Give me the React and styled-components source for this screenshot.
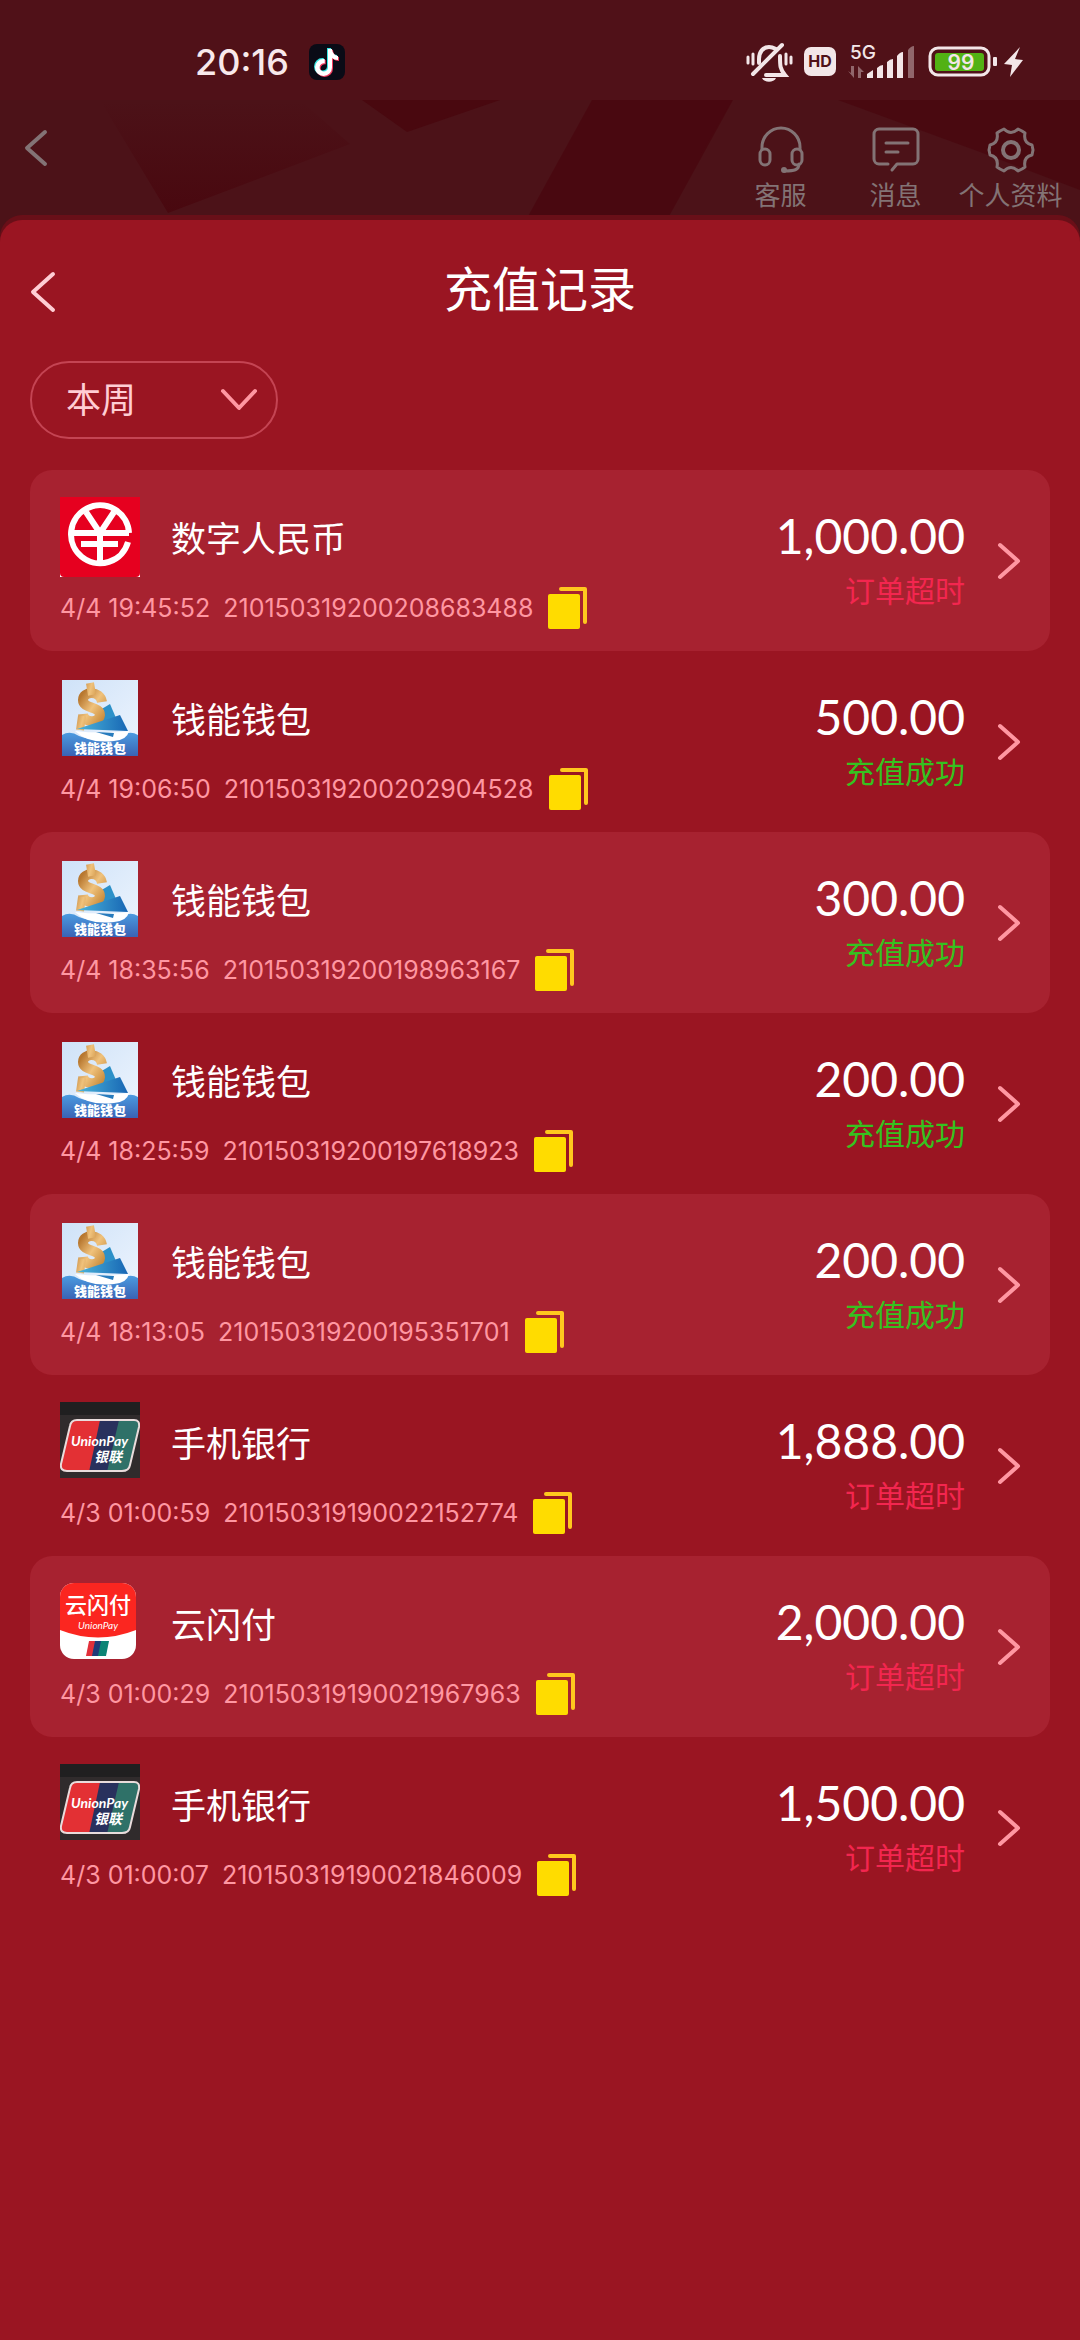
import styled, { createGlobalStyle } from "styled-components";

const records = [
  { id: "210150319200208683488", icon: "ecny", name: "数字人民币", time: "4/4 19:45:52", amount: "1,000.00", ok: false },
  { id: "210150319200202904528", icon: "wallet", name: "钱能钱包", time: "4/4 19:06:50", amount: "500.00", ok: true },
  { id: "210150319200198963167", icon: "wallet", name: "钱能钱包", time: "4/4 18:35:56", amount: "300.00", ok: true },
  { id: "210150319200197618923", icon: "wallet", name: "钱能钱包", time: "4/4 18:25:59", amount: "200.00", ok: true },
  { id: "210150319200195351701", icon: "wallet", name: "钱能钱包", time: "4/4 18:13:05", amount: "200.00", ok: true },
  { id: "210150319190022152774", icon: "bank", name: "手机银行", time: "4/3 01:00:59", amount: "1,888.00", ok: false },
  { id: "210150319190021967963", icon: "flash", name: "云闪付", time: "4/3 01:00:29", amount: "2,000.00", ok: false },
  { id: "210150319190021846009", icon: "bank", name: "手机银行", time: "4/3 01:00:07", amount: "1,500.00", ok: false },
];

function Chevron({ width, height, points, stroke = 4 }) {
  return (
    <svg width={width} height={height} viewBox={`0 0 ${width} ${height}`} aria-hidden="true">
      <polyline points={points} fill="none" stroke="currentColor" strokeWidth={stroke} strokeLinecap="round" strokeLinejoin="round" />
    </svg>
  );
}

function TikTok() {
  const note = "M19 5h4c.4 4 2.600 6.600 6 7v4c-2.400 0-4.400-.8-6-2v9.500a8.500 8.500 0 1 1-8.500-8.500h1.200v4.300a4.200 4.200 0 1 0 3.300 4.200z";
  return (
    <svg width="36" height="36" viewBox="0 0 36 36" aria-hidden="true">
      <rect width="36" height="36" rx="8" fill="#0a0b16" />
      <path d={note} fill="#37e5e2" transform="translate(-1 -1)" />
      <path d={note} fill="#f23a5d" transform="translate(1 1)" />
      <path d={note} fill="#fff" />
    </svg>
  );
}

function StatusIcons() {
  return (
    <svg width="278" height="40" viewBox="0 0 278 40" fill="#f3e6e8" aria-label="5G 99%">
      {/* muted bell */}
      <g fill="none" stroke="#f3e6e8" strokeWidth="4" strokeLinecap="round">
        <path d="M13 21v-4c0-7 4-12 10-12 3 0 5 1 7 2" />
        <path d="M34 14c0 10 0 13 5 19H20" />
        <path d="M7 32L36 3" />
        <path d="M2 15v6M7 12v10M40 12v10M45 15v6" strokeWidth="3" />
      </g>
      <path d="M16 36h14c-2 5-12 5-14 0z" />
      {/* HD badge */}
      <rect x="58" y="5" width="32" height="29" rx="7" />
      <text x="74" y="25" fill="#501118" fontSize="16" fontWeight="700" fontFamily="Inter, sans-serif" textAnchor="middle">HD</text>
      {/* signal */}
      <text x="104" y="17" fontSize="19" fontWeight="500" fontFamily="Inter, sans-serif">5G</text>
      <path d="M102 29l6 7V24h-3v7zM112 36V24l6 6h-3v6z" opacity=".4" />
      <path d="M121 32l6-4v8h-6zM131 26q3-3 6-3v13h-6zM141 20q3-3 6-3v19h-6zM151 14q3-4 6-4v26h-6z" />
      <path d="M162 8q3-4 6-4v32h-6z" opacity=".4" />
      {/* battery */}
      <rect x="184" y="6" width="59" height="27" rx="8" fill="none" stroke="#f3e6e8" strokeWidth="3" />
      <rect x="189" y="11" width="49" height="18" rx="3" fill="#52b114" />
      <text x="215" y="28" fontSize="21" fontWeight="600" fontFamily="Inter, sans-serif" textAnchor="middle">99</text>
      <rect x="247" y="15" width="4" height="9" rx="1" />
      <path d="M274 5L258 22l8 1-2 12 13-17-8-1z" />
    </svg>
  );
}

function Facets() {
  return (
    <svg width="100%" height="120" viewBox="0 0 1080 120" preserveAspectRatio="none" aria-hidden="true">
      <defs>
        <linearGradient id="facet" x1="0" y1="1" x2="0" y2="0">
          <stop offset="0" stopColor="#49080f" />
          <stop offset="1" stopColor="#49080f" stopOpacity="0" />
        </linearGradient>
      </defs>
      <path d="M100 0L168 113 350 44 300 0z" fill="url(#facet)" />
      <path d="M362 0h138l-93 32z" fill="#49080f" />
      <path d="M592 0h141l-66 120H526z" fill="#49080f" opacity=".9" />
      <path d="M838 0h242v90L980 52z" fill="#49080f" opacity=".8" />
      <path d="M700 0h32l-32 55z" fill="#49080f" opacity=".3" />
    </svg>
  );
}

function Headset() {
  return (
    <svg width="48" height="48" viewBox="0 0 48 48" fill="none" stroke="currentColor" strokeWidth="3" aria-hidden="true">
      <path d="M5 24v-3a19 19 0 0 1 38 0v3" />
      <rect x="3" y="23" width="10" height="16" rx="5" />
      <rect x="35" y="23" width="10" height="16" rx="5" />
      <path d="M42 38c0 6-5 7-14 7" strokeLinecap="round" />
      <circle cx="27" cy="44" r="3" fill="currentColor" stroke="none" />
    </svg>
  );
}

function Message() {
  return (
    <svg width="48" height="48" viewBox="0 0 48 48" fill="none" stroke="currentColor" strokeWidth="3" strokeLinecap="round" strokeLinejoin="round" aria-hidden="true">
      <path d="M16 38H7a5 5 0 0 1-5-5V8a5 5 0 0 1 5-5h34a5 5 0 0 1 5 5v25a5 5 0 0 1-5 5H25l-5 6" />
      <path d="M14 17h22M14 26h12" />
    </svg>
  );
}

function Gear() {
  return (
    <svg width="48" height="48" viewBox="0 0 48 48" fill="none" stroke="currentColor" strokeWidth="3" strokeLinejoin="round" aria-hidden="true">
      <path d="M13 5L17 3Q24 10 31 3L35 5 38 7Q36 17 45 19L46 24 45 29Q36 31 38 41L35 43 31 45Q24 38 17 45L13 43 10 41Q12 31 3 29L2 24 3 19Q12 17 10 7z" />
      <circle cx="24" cy="24" r="8" strokeWidth="4" />
    </svg>
  );
}

function Copy() {
  return (
    <svg width="40" height="42" viewBox="0 0 40 42" aria-hidden="true">
      <rect y="7" width="32" height="35" rx="2" fill="#ffdc00" />
      <path d="M13 2h24v33" fill="none" stroke="#ffc81e" strokeWidth="4" strokeLinecap="round" strokeLinejoin="round" />
    </svg>
  );
}

function PayIcon({ kind }) {
  if (kind === "ecny") {
    return (
      <svg width="80" height="80" viewBox="0 0 80 80" aria-hidden="true">
        <rect width="80" height="80" fill="#fff" />
        <rect width="80" height="80" rx="4" fill="#e6001f" />
        <rect width="80" height="40" fill="#e6001f" />
        <g fill="none" stroke="#fff" strokeWidth="6">
          <path d="M68 45A29 29 0 1 1 69 36" />
          <path d="M10 36h59M21 47h37M26 15l14 21 14-21M40 36v30" />
        </g>
      </svg>
    );
  }
  if (kind === "bank") {
    return (
      <svg width="80" height="76" viewBox="0 0 80 76" aria-hidden="true">
        <rect width="80" height="76" fill="#302b2c" />
        <rect width="80" height="13" fill="#201f20" />
        <clipPath id="card">
          <path d="M17 18h57q6 0 5 7l-9 38q-1 6-8 6H7q-7 0-6-7l9-38q1-6 7-6z" />
        </clipPath>
        <g clipPath="url(#card)">
          <rect width="80" height="76" fill="#2f7168" />
          <path d="M0 0h44L30 76H0z" fill="#e33034" />
          <path d="M40 18h19L47 70H29z" fill="#29315d" />
        </g>
        <path d="M17 18h57q6 0 5 7l-9 38q-1 6-8 6H7q-7 0-6-7l9-38q1-6 7-6z" fill="none" stroke="#e9dcdc" strokeWidth="2" />
        <g fill="#fff" fontStyle="italic" fontWeight="700">
          <text x="11" y="44" fontSize="14" fontFamily="Lato, sans-serif">UnionPay</text>
          <text x="34" y="60" fontSize="14" fontFamily="Noto Sans CJK SC, sans-serif">银联</text>
        </g>
      </svg>
    );
  }
  if (kind === "flash") {
    return (
      <svg width="80" height="80" viewBox="0 0 80 80" aria-hidden="true">
        <clipPath id="app"><rect width="76" height="76" rx="14" /></clipPath>
        <g clipPath="url(#app)">
          <rect width="76" height="76" fill="#fff" />
          <path d="M0 0h76v47Q38 62 0 47z" fill="#fb2620" />
        </g>
        <text x="38" y="30" fill="#fff" fontSize="22" fontWeight="500" fontFamily="Noto Sans CJK SC, sans-serif" textAnchor="middle">云闪付</text>
        <text x="38" y="46" fill="#fff" fontSize="10" fontStyle="italic" fontFamily="Lato, sans-serif" textAnchor="middle">UnionPay</text>
        <path d="M29 58h8l-3 15h-8z" fill="#e2303a" />
        <path d="M35 58h8l-3 15h-8z" fill="#1f3a78" />
        <path d="M41 58h8l-3 15h-8z" fill="#0c8475" />
      </svg>
    );
  }
  return (
    <svg width="80" height="80" viewBox="0 0 80 80" aria-hidden="true">
      <defs>
        <linearGradient id="sky" x1="0" y1="0" x2="1" y2="1">
          <stop offset="0" stopColor="#cfe2f8" />
          <stop offset="1" stopColor="#eef5fe" />
        </linearGradient>
        <linearGradient id="sail" x1="0" y1="0" x2="1" y2="0">
          <stop offset="0" stopColor="#4bb5da" />
          <stop offset="1" stopColor="#1766b4" />
        </linearGradient>
        <linearGradient id="sea" x1="0" y1="0" x2="0" y2="1">
          <stop offset="0" stopColor="#4b9be0" />
          <stop offset="1" stopColor="#3a62b4" />
        </linearGradient>
        <linearGradient id="gold" x1="0" y1="0" x2="1" y2="1">
          <stop offset="0" stopColor="#b87830" />
          <stop offset=".5" stopColor="#f0c27c" />
          <stop offset="1" stopColor="#c98c3c" />
        </linearGradient>
      </defs>
      <rect x="2" y="2" width="76" height="76" fill="url(#sky)" />
      <path d="M40 32l10-6 6 14-16 8z" fill="#2c90c8" />
      <g fill="none" stroke="url(#gold)">
        <path d="M42 24C40 12 23 13 23 22s17 6 17 15c-1 9-16 8-17-1" strokeWidth="10" />
        <path d="M30 5l2 12M22 38l-2 14" strokeWidth="8" />
      </g>
      <path d="M17 51l43-14 8 16z" fill="url(#sail)" />
      <path d="M2 57q8-5 17 1 21 8 42 0 9-6 17-1v21H2z" fill="url(#sea)" />
      <path d="M15 53q25 3 54 0-2 9-15 10-26 3-39-10z" fill="#fff" />
      <path d="M36 54l18 1-1 4z" fill="#277bbd" />
      <text x="40" y="75" fill="#fff" fontSize="13" fontWeight="900" fontFamily="Noto Sans CJK SC, sans-serif" textAnchor="middle">钱能钱包</text>
    </svg>
  );
}

export default function App() {
  return (
    <>
      <GlobalStyle />
      <Page>
        <StatusBar>
          <Clock>
            20:16
            <TikTok />
          </Clock>
          <StatusIcons />
        </StatusBar>
        <TopNav>
          <Backdrop>
            <Facets />
          </Backdrop>
          <BackButton aria-label="返回首页">
            <Chevron width={24} height={38} points="21,3 3,19 21,35" />
          </BackButton>
          <NavLinks>
            <NavLink href="#service">
              <Headset />
              客服
            </NavLink>
            <NavLink href="#messages">
              <Message />
              消息
            </NavLink>
            <NavLink href="#profile">
              <Gear />
              个人资料
            </NavLink>
          </NavLinks>
        </TopNav>
        <Sheet>
          <SheetHeader>
            <SheetBack aria-label="返回">
              <Chevron width={26} height={42} points="23,3 3,21 23,39" />
            </SheetBack>
            <Title>充值记录</Title>
          </SheetHeader>
          <Filter>
            <Select aria-label="时间范围" defaultValue="week">
              <option value="week">本周</option>
            </Select>
            <Chevron width={38} height={24} points="3,3 19,20 35,3" />
          </Filter>
          <List>
            {records.map((r) => (
              <Row key={r.id}>
                <Info>
                  <Method>
                    <IconBox>
                      <PayIcon kind={r.icon} />
                    </IconBox>
                    {r.name}
                  </Method>
                  <Meta>
                    <span>{r.time}</span>
                    <span>{r.id}</span>
                    <CopyButton aria-label="复制">
                      <Copy />
                    </CopyButton>
                  </Meta>
                </Info>
                <Result>
                  <Amount>{r.amount}</Amount>
                  <Status $ok={r.ok}>{r.ok ? "充值成功" : "订单超时"}</Status>
                </Result>
                <Detail href={"#" + r.id} aria-label="详情">
                  <Chevron width={24} height={38} points="3,3 21,19 3,35" />
                </Detail>
              </Row>
            ))}
          </List>
        </Sheet>
      </Page>
    </>
  );
}

const GlobalStyle = createGlobalStyle`
  * {
    box-sizing: border-box;
  }

  body {
    margin: 0;
    background: #9a1522;
    font-family: Inter, "Noto Sans CJK SC", sans-serif;
  }

  svg {
    display: block;
    flex-shrink: 0;
  }

  button {
    border: none;
    padding: 0;
    background: none;
    cursor: pointer;
  }
`;

const Page = styled.div`
  display: flex;
  flex-direction: column;
  min-height: 100vh;
  background: #4c1218;
`;

const StatusBar = styled.header`
  display: flex;
  align-items: center;
  justify-content: space-between;
  height: 100px;
  padding: 24px 56px 0 195px;
  background: #501118;
`;

const Clock = styled.div`
  display: flex;
  align-items: center;
  gap: 20px;
  color: #f8e9eb;
  font-size: 36px;
  font-weight: 500;
`;

const TopNav = styled.nav`
  position: relative;
  display: flex;
  justify-content: space-between;
  height: 120px;
  padding: 26px 12px 0 24px;
  color: #837375;
`;

const Backdrop = styled.div`
  position: absolute;
  inset: 0;
`;

const BackButton = styled.button`
  position: relative;
  align-self: flex-start;
  padding-top: 3px;
  color: inherit;
`;

const NavLinks = styled.div`
  position: relative;
  display: flex;
`;

const NavLink = styled.a`
  display: flex;
  flex-direction: column;
  align-items: center;
  gap: 4px;
  min-width: 115px;
  color: inherit;
  font-size: 26px;
  line-height: 36px;
  text-decoration: none;
`;

const Sheet = styled.main`
  position: relative;
  flex: 1;
  padding: 30px 30px 40px;
  border-radius: 22px 22px 0 0;
  background: #9a1522;
  box-shadow: 0 -5px 0 #690f18;
`;

const SheetHeader = styled.div`
  display: grid;
  grid-template-columns: 26px 1fr 26px;
  align-items: center;
  height: 80px;
`;

const SheetBack = styled.button`
  padding-top: 4px;
  color: #ffcdd4;
`;

const Title = styled.h1`
  margin: 0;
  color: #fff;
  font-size: 48px;
  font-weight: 400;
  line-height: 80px;
  text-align: center;
`;

const Filter = styled.label`
  display: flex;
  align-items: center;
  justify-content: space-between;
  width: 248px;
  height: 78px;
  margin-top: 31px;
  padding: 0 18px 0 34px;
  border: 2px solid #c44453;
  border-radius: 39px;
  color: #ff97a2;
`;

const Select = styled.select`
  appearance: none;
  padding: 0;
  border: none;
  background: none;
  color: #ffcdd4;
  font: inherit;
  font-size: 35px;
`;

const List = styled.ul`
  margin: 31px 0 0;
  padding: 0;
  list-style: none;
`;

const Row = styled.li`
  display: flex;
  align-items: center;
  height: 181px;
  padding: 0 29px 0 30px;
  border-radius: 22px;

  &:nth-child(odd) {
    background: #a72230;
  }
`;

const Info = styled.div`
  flex: 1;
  padding-top: 4px;
`;

const Method = styled.div`
  display: flex;
  align-items: center;
  gap: 31px;
  color: #fff;
  font-size: 35px;
`;

const IconBox = styled.span`
  width: 80px;
  height: 80px;
`;

const Meta = styled.div`
  display: flex;
  align-items: center;
  gap: 13px;
  margin-top: 10px;
  color: #ff97a2;
  font-size: 25px;
`;

const CopyButton = styled.button`
  margin-left: 2px;
`;

const Result = styled.div`
  display: flex;
  flex-direction: column;
  align-items: flex-end;
`;

const Amount = styled.strong`
  color: #fff;
  font-family: Lato, Inter, sans-serif;
  font-size: 48px;
  font-weight: 400;
  line-height: 60px;
`;

const Status = styled.span`
  color: ${({ $ok }) => ($ok ? "#35c21f" : "#f3264f")};
  font-size: 30px;
  line-height: 50px;
`;

const Detail = styled.a`
  margin-left: 32px;
  color: #ff97a2;
`;
